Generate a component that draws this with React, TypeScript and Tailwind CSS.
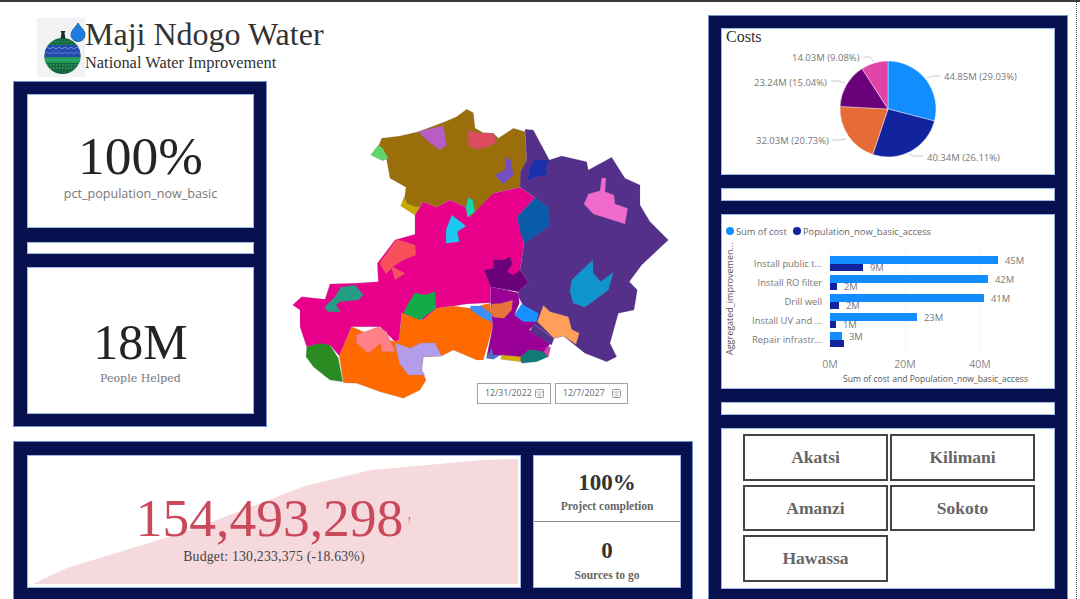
import React from "react";

const serif = "[font-family:'Liberation_Serif',serif]";
const dserif = "[font-family:'DejaVu_Serif',serif]";
const sans = "[font-family:'Open_Sans',sans-serif]";

const regions: [string, string][] = [
  ["#9A6F0B", "560,28 580,38 585,85 610,98 640,100 655,115 700,85 735,95 740,180 720,262 640,280 632,298 590,340 570,352 555,320 510,300 470,322 430,305 405,345 370,318 378,262 330,235 320,180 295,140 305,115 360,108 415,95 495,65 530,50"],
  ["#54308A", "735,88 760,90 808,180 845,168 920,185 925,210 995,172 1035,235 1080,255 1080,315 1110,365 1165,420 1085,495 1048,545 1072,570 1062,630 1015,640 990,730 1010,770 980,785 915,760 850,708 822,715 760,672 715,590 715,570 745,545 720,510 732,430 712,350 765,293 720,262 722,215 740,180"],
  ["#E8008B", "720,262 765,293 712,350 732,430 720,510 745,545 715,575 632,560 632,608 560,612 520,618 470,625 430,660 365,640 358,720 345,725 300,680 215,680 178,768 150,735 80,740 60,680 60,630 38,615 65,590 135,598 150,552 225,550 295,545 292,490 345,420 405,403 405,345 430,305 470,322 510,300 555,320 570,352 640,280"],
  ["#FF6A00", "365,640 430,660 470,625 520,618 570,625 630,610 638,680 610,780 590,780 520,750 485,768 430,770 425,810 438,840 420,870 370,895 300,875 230,850 190,848 178,768 215,680 250,695 345,725 358,720"],
  ["#2A8B22", "80,740 120,730 150,735 175,775 188,845 150,840 100,800 78,770"],
  ["#9A0096", "632,560 715,578 718,610 705,640 770,665 748,690 820,715 805,740 800,770 725,785 660,765 620,770 638,680 632,608"],
  ["#6B007B", "640,478 670,480 690,470 698,490 682,515 700,525 720,510 745,545 715,575 632,560 612,510 640,505"],
  ["#B85DC8", "415,95 455,85 490,78 500,135 480,150 440,120"],
  ["#DD4B5E", "565,88 585,98 640,100 650,125 625,140 590,148 565,135"],
  ["#5FD66B", "295,135 308,145 325,175 308,182 272,165"],
  ["#744EC2", "678,172 692,180 700,225 670,253 645,225 675,210"],
  ["#1B2FAA", "765,178 808,180 798,205 802,225 765,232 742,243 748,205"],
  ["#C8A800", "372,292 382,310 405,320 420,320 405,345 362,318"],
  ["#10D8B0", "565,293 578,300 585,335 562,352 558,320"],
  ["#1CC8F0", "515,345 558,378 532,395 538,425 498,430 498,390"],
  ["#0A5CA8", "765,293 805,320 808,378 780,398 733,430 720,395 712,350"],
  ["#F06ACC", "965,233 978,235 975,275 1002,285 1005,312 1043,325 1035,372 940,342 912,312 925,282 960,272"],
  ["#F8505A", "350,418 405,435 408,465 370,480 338,500 375,520 345,540 335,505 318,522 298,490"],
  ["#269C84", "182,562 225,555 250,585 235,600 180,605 168,615 182,635 145,635 133,622 165,590"],
  ["#13AA4A", "405,578 435,585 465,575 468,625 420,660 370,640 385,610"],
  ["#FF8088", "228,705 295,680 320,695 345,755 305,755 302,730 265,760 230,730"],
  ["#B39DEB", "345,728 390,745 420,730 465,728 485,768 430,770 425,810 435,825 385,825 358,790"],
  ["#0E96CC", "938,480 940,520 962,545 1000,517 985,570 915,622 880,610 870,575 875,540"],
  ["#FF9F5A", "790,616 810,635 865,650 875,688 898,700 888,733 850,708 822,715 772,665"],
  ["#54308A", "760,672 822,715 815,735 750,695"],
  ["#1890FF", "725,612 775,640 770,665 730,665 703,645"],
  ["#3D90F8", "572,618 605,618 635,642 635,665 608,655 570,628"],
  ["#E8743B", "635,612 665,610 698,600 695,630 672,655 640,652 632,640"],
  ["#107A78", "745,750 760,750 790,755 805,770 770,785 725,790 722,770"],
  ["#D8B000", "665,765 722,770 722,785 662,778"],
  ["#4A70C8", "635,745 640,765 662,765 640,778 618,775"],
  ["#D040B0", "800,740 812,742 805,772 792,755"],
];

const pieData: [number, string][] = [
  [29.03, "#118DFF"],
  [26.11, "#12239E"],
  [20.73, "#E66C37"],
  [15.04, "#6B007B"],
  [9.09, "#E044A7"],
];

function piePaths(cx: number, cy: number, r: number) {
  let acc = 0;
  return pieData.map(([p, c]) => {
    const a0 = (acc / 100) * 2 * Math.PI;
    acc += p;
    const a1 = (acc / 100) * 2 * Math.PI;
    const x0 = cx + r * Math.sin(a0);
    const y0 = cy - r * Math.cos(a0);
    const x1 = cx + r * Math.sin(a1);
    const y1 = cy - r * Math.cos(a1);
    return { d: `M${cx},${cy} L${x0},${y0} A${r},${r} 0 0 1 ${x1},${y1} Z`, c };
  });
}

function Logo() {
  return (
    <svg width="48" height="59" viewBox="0 0 48 59" className="block bg-[#f1f2f4] overflow-visible">
      <defs>
        <clipPath id="pot">
          <circle cx="25.5" cy="38" r="18" />
        </clipPath>
      </defs>
      <path d="M23.5 21 L24.5 15 L23.5 13 H28.5 L27.5 15 L28.5 21 Z" fill="#1c2b3a" />
      <g clipPath="url(#pot)">
        <rect x="7" y="19" width="37" height="38" fill="#15683e" />
        <rect x="7" y="27" width="37" height="12" fill="#2748ad" />
        <path d="M12 23.5 H39 M10 26 H41" stroke="#3fae72" strokeWidth="0.8" strokeDasharray="1.5 1.5" />
        <path d="M7 31 l3 -2 l3 2 l3 -2 l3 2 l3 -2 l3 2 l3 -2 l3 2 l3 -2 l3 2 l3 -2 l3 2" fill="none" stroke="#67c3e8" strokeWidth="0.7" />
        <path d="M7 36 l3 -2 l3 2 l3 -2 l3 2 l3 -2 l3 2 l3 -2 l3 2 l3 -2 l3 2 l3 -2 l3 2" fill="none" stroke="#5f9fe0" strokeWidth="0.7" />
        <rect x="7" y="39" width="37" height="6" fill="#1f9a58" />
        <path d="M7 42 H44 M7 47 H44 M7 50 H44" stroke="#5fcf8e" strokeWidth="0.8" strokeDasharray="1.5 1.5" />
      </g>
      <path d="M41 5 C39 9 34 12 34 17 A7 6.5 0 0 0 48 17 C48 12 43 9 41 5 Z" fill="#1b7fe0" stroke="#0f4f96" strokeWidth="0.8" />
    </svg>
  );
}

function Card({ className, children }: { className: string; children?: React.ReactNode }) {
  return <div className={`bg-white border border-[#9db8dc] ${className}`}>{children}</div>;
}

function CalIcon() {
  return (
    <svg width="9" height="9" viewBox="0 0 9 9" className="shrink-0">
      <rect x="0.5" y="0.5" width="8" height="8" rx="1" fill="none" stroke="#999" />
      <path d="M1 3 H8 M2.5 5 H6.5 M2.5 6.8 H6.5" stroke="#aaa" strokeWidth="0.8" />
    </svg>
  );
}

function DateBox({ text, w }: { text: string; w: string }) {
  return (
    <div className={`${w} h-[21px] border-[1.5px] border-[#a3a3a3] bg-white flex items-center justify-between pl-[7px] pr-[6px] ${sans} text-[8.8px] text-[#666]`}>
      <span>{text}</span>
      <CalIcon />
    </div>
  );
}

function Slicer({ label }: { label: string }) {
  return (
    <div className={`border-2 border-[#444] flex items-center justify-center ${serif} font-bold text-[17.5px] text-[#666]`}>
      {label}
    </div>
  );
}

const bars = [
  { name: "Install public t...", a: 168, b: 33, la: "45M", lb: "9M", xb: 40 },
  { name: "Install RO filter", a: 158, b: 7, la: "42M", lb: "2M", xb: 14 },
  { name: "Drill well", a: 154, b: 9, la: "41M", lb: "2M", xb: 16 },
  { name: "Install UV and ...", a: 87, b: 6, la: "23M", lb: "1M", xb: 13 },
  { name: "Repair infrastr...", a: 12, b: 14, la: "3M", lb: "", xb: 0 },
];

export default function App() {
  return (
    <div className="w-[1080px] h-[599px] bg-white border-t-2 border-[#3a3a3a] flex overflow-hidden">
      <div className="w-[700px] shrink-0 h-full flex flex-col">
        <div className="h-[59px] mt-[16px] ml-[37px] flex">
          <Logo />
          <div className={`${serif} text-[#333] -mt-[2px]`}>
            <div className="text-[32px] leading-[36px] whitespace-nowrap">Maji Ndogo Water</div>
            <div className="text-[16.4px] leading-[20px] mt-[1px] whitespace-nowrap">National Water Improvement</div>
          </div>
        </div>
        <div className="flex mt-[4px] ml-[13px]">
          <div className="w-[254px] h-[346px] bg-[#07114F] border border-[#6f93c9] pl-[13px] pr-[12px] pt-[12px] flex flex-col shrink-0">
            <Card className="h-[134px] flex flex-col items-center pt-[33px]">
              <div className={`${serif} text-[53.5px] leading-[56px] text-[#252423]`}>100%</div>
              <div className={`${sans} text-[12.6px] leading-[18px] mt-[1px] text-[#777]`}>pct_population_now_basic</div>
            </Card>
            <Card className="h-[12px] mt-[14px]" />
            <Card className="h-[147px] mt-[13px] flex flex-col items-center pt-[49px]">
              <div className={`${serif} text-[50px] leading-[50px] text-[#252423]`}>18M</div>
              <div className={`${dserif} text-[11px] leading-[15px] mt-[4px] text-[#777]`}>People Helped</div>
            </Card>
          </div>
          <div className="relative ml-[13px] mt-[19px] w-[400px] h-[310px]">
            <svg width="400" height="310" viewBox="0 0 1200 930" className="block">
              {regions.map(([c, p], i) => (
                <polygon key={i} points={p} fill={c} stroke="#7d6f96" strokeOpacity="0.35" strokeWidth="1.5" strokeLinejoin="round" />
              ))}
            </svg>
            <div className="absolute left-[197px] top-[283px] flex gap-[4px]">
              <DateBox text="12/31/2022" w="w-[74px]" />
              <DateBox text="12/7/2027" w="w-[73px]" />
            </div>
          </div>
        </div>
        <div className="ml-[13px] mt-[14px] w-[680px] flex-1 bg-[#07114F] border border-[#6f93c9] border-b-0 pl-[13px] pr-[11px] pt-[13px] flex gap-[12px]">
          <Card className="relative w-[494px] h-[133px] flex flex-col items-center pt-[35px]">
            <svg width="494" height="133" viewBox="0 0 494 133" className="absolute inset-0">
              <polygon points="5,128 39,112 160,75 277,30 343,14 455,4 490,3 490,128" fill="#F5D9DD" />
            </svg>
            <div className={`relative -ml-[9px] ${serif} text-[53.5px] leading-[54px] text-[#C9495B]`}>
              <span>154,493,298</span>
              <span className="absolute left-[272px] top-[25px] text-[9px] leading-[9px]">!</span>
            </div>
            <div className={`relative ${serif} text-[13.8px] leading-[18px] mt-[3px] text-[#444] tracking-[0.2px]`}>Budget: 130,233,375 (-18.63%)</div>
          </Card>
          <Card className="w-[148px] h-[133px] flex flex-col">
            <div className="h-[66px] border-b border-[#8a8a8a] flex flex-col items-center pt-[14px]">
              <div className={`${serif} font-bold text-[23px] leading-[26px] text-[#333]`}>100%</div>
              <div className={`${serif} font-bold text-[11.5px] leading-[14px] mt-[3px] text-[#666]`}>Project completion</div>
            </div>
            <div className="flex-1 flex flex-col items-center pt-[16px]">
              <div className={`${serif} font-bold text-[23px] leading-[26px] text-[#333]`}>0</div>
              <div className={`${serif} font-bold text-[11.5px] leading-[14px] mt-[4px] text-[#666]`}>Sources to go</div>
            </div>
          </Card>
        </div>
      </div>

      <div className="w-[369px] ml-[8px] shrink-0 border-r border-dotted border-[#555] pt-[13px] h-full">
        <div className="w-[360px] h-[600px] bg-[#07114F] border border-[#6f93c9] px-[12px] pt-[12px] flex flex-col">
          <Card className="relative h-[147px]">
            <div className={`${serif} text-[16px] leading-[18px] pl-[4px] -mt-[1px] text-[#333]`}>Costs</div>
            <svg width="334" height="147" viewBox="721 28 334 147" className="absolute -left-px -top-px">
              {piePaths(888, 109, 48).map((s, i) => (
                <path key={i} d={s.d} fill={s.c} stroke="#fff" strokeWidth="0.4" />
              ))}
              <g fill="none" stroke="#bbb" strokeWidth="0.8">
                <path d="M927,78 L932,76 H940" />
                <path d="M909,154 L914,156 H923" />
                <path d="M846,139 L840,140 H832" />
                <path d="M845,83 L838,81 H831" />
                <path d="M874,62 L870,57 H864" />
              </g>
              <g className={sans} fontSize="9.5" fill="#777">
                <text x="944" y="80">44.85M (29.03%)</text>
                <text x="927" y="161">40.34M (26.11%)</text>
                <text x="756" y="144">32.03M (20.73%)</text>
                <text x="754" y="86">23.24M (15.04%)</text>
                <text x="792" y="61">14.03M (9.08%)</text>
              </g>
            </svg>
          </Card>
          <Card className="h-[13px] mt-[13px]" />
          <Card className="relative h-[175px] mt-[13px]">
            <svg width="334" height="175" viewBox="721 214 334 175" className="absolute -left-px -top-px">
              <circle cx="730" cy="231" r="4" fill="#118DFF" />
              <circle cx="797" cy="231" r="4" fill="#12239E" />
              <g className={sans} fontSize="9.3" fill="#666">
                <text x="736" y="235">Sum of cost</text>
                <text x="803" y="235">Population_now_basic_access</text>
              </g>
              <g stroke="#ddd" strokeDasharray="1 3" strokeWidth="1">
                <path d="M830,249 V351" />
                <path d="M905.5,249 V351" />
                <path d="M981,249 V351" />
              </g>
              {bars.map((b, i) => {
                const y = 256 + i * 19;
                return (
                  <g key={b.name}>
                    <rect x="830" y={y} width={b.a} height="8" fill="#118DFF" />
                    <rect x="830" y={y + 8} width={b.b} height="7" fill="#12239E" />
                    <g className={sans} fontSize="9.4" fill="#777">
                      <text x="822" y={y + 11} textAnchor="end">{b.name}</text>
                      <text x={830 + b.a + 7} y={y + 8}>{b.la}</text>
                      {b.lb && <text x={830 + b.xb} y={y + 15}>{b.lb}</text>}
                    </g>
                  </g>
                );
              })}
              <g className={sans} fontSize="10.5" fill="#888" textAnchor="middle">
                <text x="830" y="368">0M</text>
                <text x="905" y="368">20M</text>
                <text x="980" y="368">40M</text>
              </g>
              <text x="843" y="382" className={sans} fontSize="8.6" fill="#555">Sum of cost and Population_now_basic_access</text>
              <text transform="translate(733,355) rotate(-90)" className={sans} fontSize="9" fill="#555">Aggregated_improvemen...</text>
            </svg>
          </Card>
          <Card className="h-[13px] mt-[13px]" />
          <Card className="h-[161px] mt-[13px] pl-[21px] pt-[5px]">
            <div className="grid grid-cols-[145px_145px] grid-rows-[47px_46px_47px] gap-x-[2px] gap-y-[4px]">
              <Slicer label="Akatsi" />
              <Slicer label="Kilimani" />
              <Slicer label="Amanzi" />
              <Slicer label="Sokoto" />
              <Slicer label="Hawassa" />
            </div>
          </Card>
        </div>
      </div>
    </div>
  );
}
